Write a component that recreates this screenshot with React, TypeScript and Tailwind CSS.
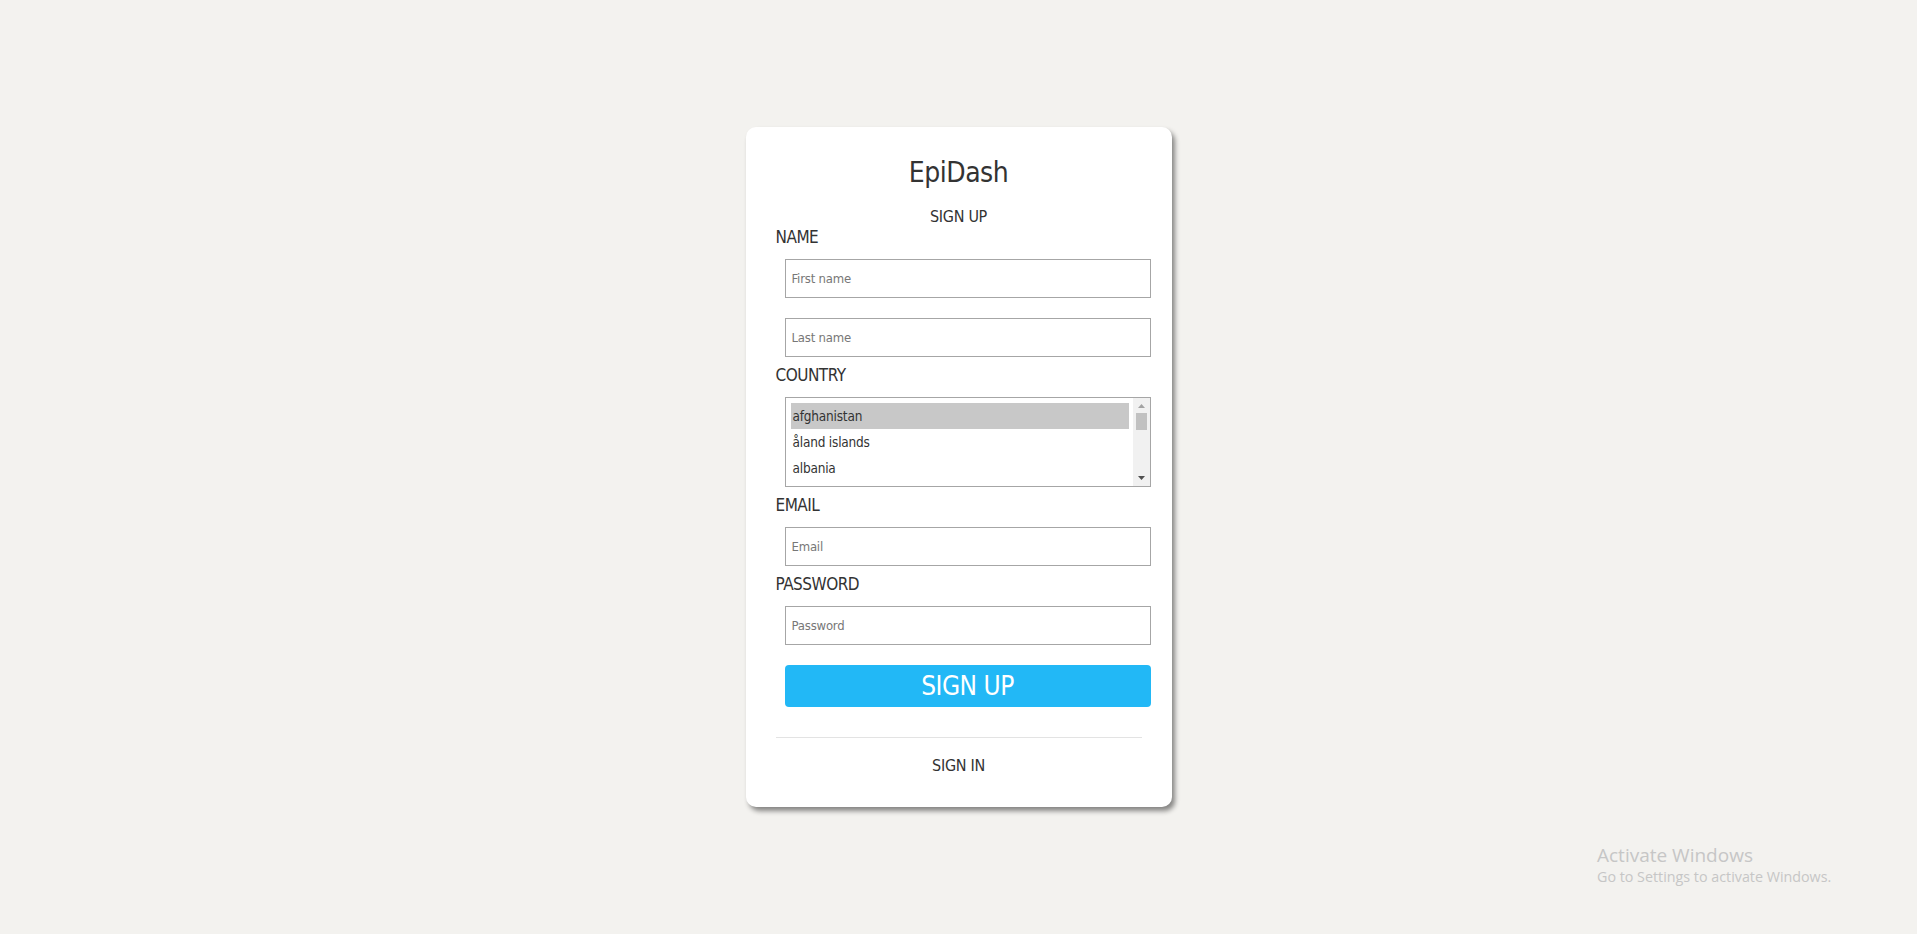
import React from "react";

const font = { fontFamily: '"DejaVu Sans Condensed", "Liberation Sans", sans-serif' };

function Field({ placeholder, type = "text", className = "" }: { placeholder: string; type?: string; className?: string }) {
  return (
    <input
      type={type}
      placeholder={placeholder}
      className={[
        "ml-[9px] block h-[39px] w-[366px] border border-[#a6a6a6] bg-white px-[6px] text-[13px] tracking-[-0.2px] text-[#333] outline-none placeholder:text-[#777]",
        className,
      ].join(" ")}
    />
  );
}

function Label({ children, className = "" }: { children: React.ReactNode; className?: string }) {
  return (
    <div className={["h-[20px] text-[17px] leading-[20px] tracking-[-0.5px] text-[#333]", className].join(" ")}>
      {children}
    </div>
  );
}

const countries = ["afghanistan", "åland islands", "albania"];

export default function App() {
  return (
    <div className="relative flex min-h-screen items-center justify-center bg-[#f3f2ef]" style={font}>
      <div className="w-[426px] rounded-[10px] bg-white px-[30px] pb-[31px] pt-[26px] shadow-[3px_4px_5px_rgba(0,0,0,0.45)]">
        <h1 className="h-[40px] text-center text-[28px] font-medium leading-[40px] tracking-[-0.5px] text-[#333]">EpiDash</h1>
        <div className="mt-[14px] h-[20px] text-center text-[16px] leading-[20px] tracking-[-0.3px] text-[#333]">SIGN UP</div>

        <Label>NAME</Label>
        <Field placeholder="First name" className="mt-[12px]" />
        <Field placeholder="Last name" className="mt-[20px]" />

        <Label className="mt-[8px]">COUNTRY</Label>
        <div className="ml-[9px] mt-[12px] flex h-[90px] w-[366px] border border-[#a6a6a6] bg-white">
          <div className="flex-1 pl-[5px] pr-[4px] pt-[5px]">
            {countries.map((c, i) => (
              <div
                key={c}
                className={[
                  "h-[26px] pl-[2px] text-[13.5px] leading-[26px] tracking-[-0.2px] text-[#333]",
                  i === 0 ? "bg-[#c8c8c8]" : "",
                ].join(" ")}
              >
                {c}
              </div>
            ))}
          </div>
          <div className="flex w-[17px] flex-col items-center bg-[#f1f1f1]">
            <svg width="9" height="6" viewBox="0 0 9 6" className="mt-[5px]">
              <path d="M4.5 1 L8 5 L1 5 Z" fill="#a3a3a3" />
            </svg>
            <div className="mt-[4px] h-[17px] w-[11px] bg-[#c1c1c1]" />
            <div className="flex-1" />
            <svg width="9" height="6" viewBox="0 0 9 6" className="mb-[5px]">
              <path d="M1 1 L8 1 L4.5 5 Z" fill="#505050" />
            </svg>
          </div>
        </div>

        <Label className="mt-[8px]">EMAIL</Label>
        <Field placeholder="Email" type="email" className="mt-[12px]" />

        <Label className="mt-[8px]">PASSWORD</Label>
        <Field placeholder="Password" type="password" className="mt-[12px]" />

        <button className="ml-[9px] mt-[20px] block h-[42px] w-[366px] rounded-[4px] bg-[#22b8f6] text-[26px] leading-[42px] tracking-[-0.5px] text-white">
          SIGN UP
        </button>

        <div className="mt-[30px] h-px bg-[#e3e3e3]" />
        <div className="mt-[18px] h-[20px] text-center text-[16px] leading-[20px] tracking-[-0.3px] text-[#333]">SIGN IN</div>
      </div>

      <div className="absolute left-[1597px] top-[843px] text-[#c6c6c6]" style={{ fontFamily: '"Open Sans", "Noto Sans", sans-serif' }}>
        <div className="text-[19px] leading-[24px]">Activate Windows</div>
        <div className="text-[14.3px] leading-[20px]">Go to Settings to activate Windows.</div>
      </div>
    </div>
  );
}
